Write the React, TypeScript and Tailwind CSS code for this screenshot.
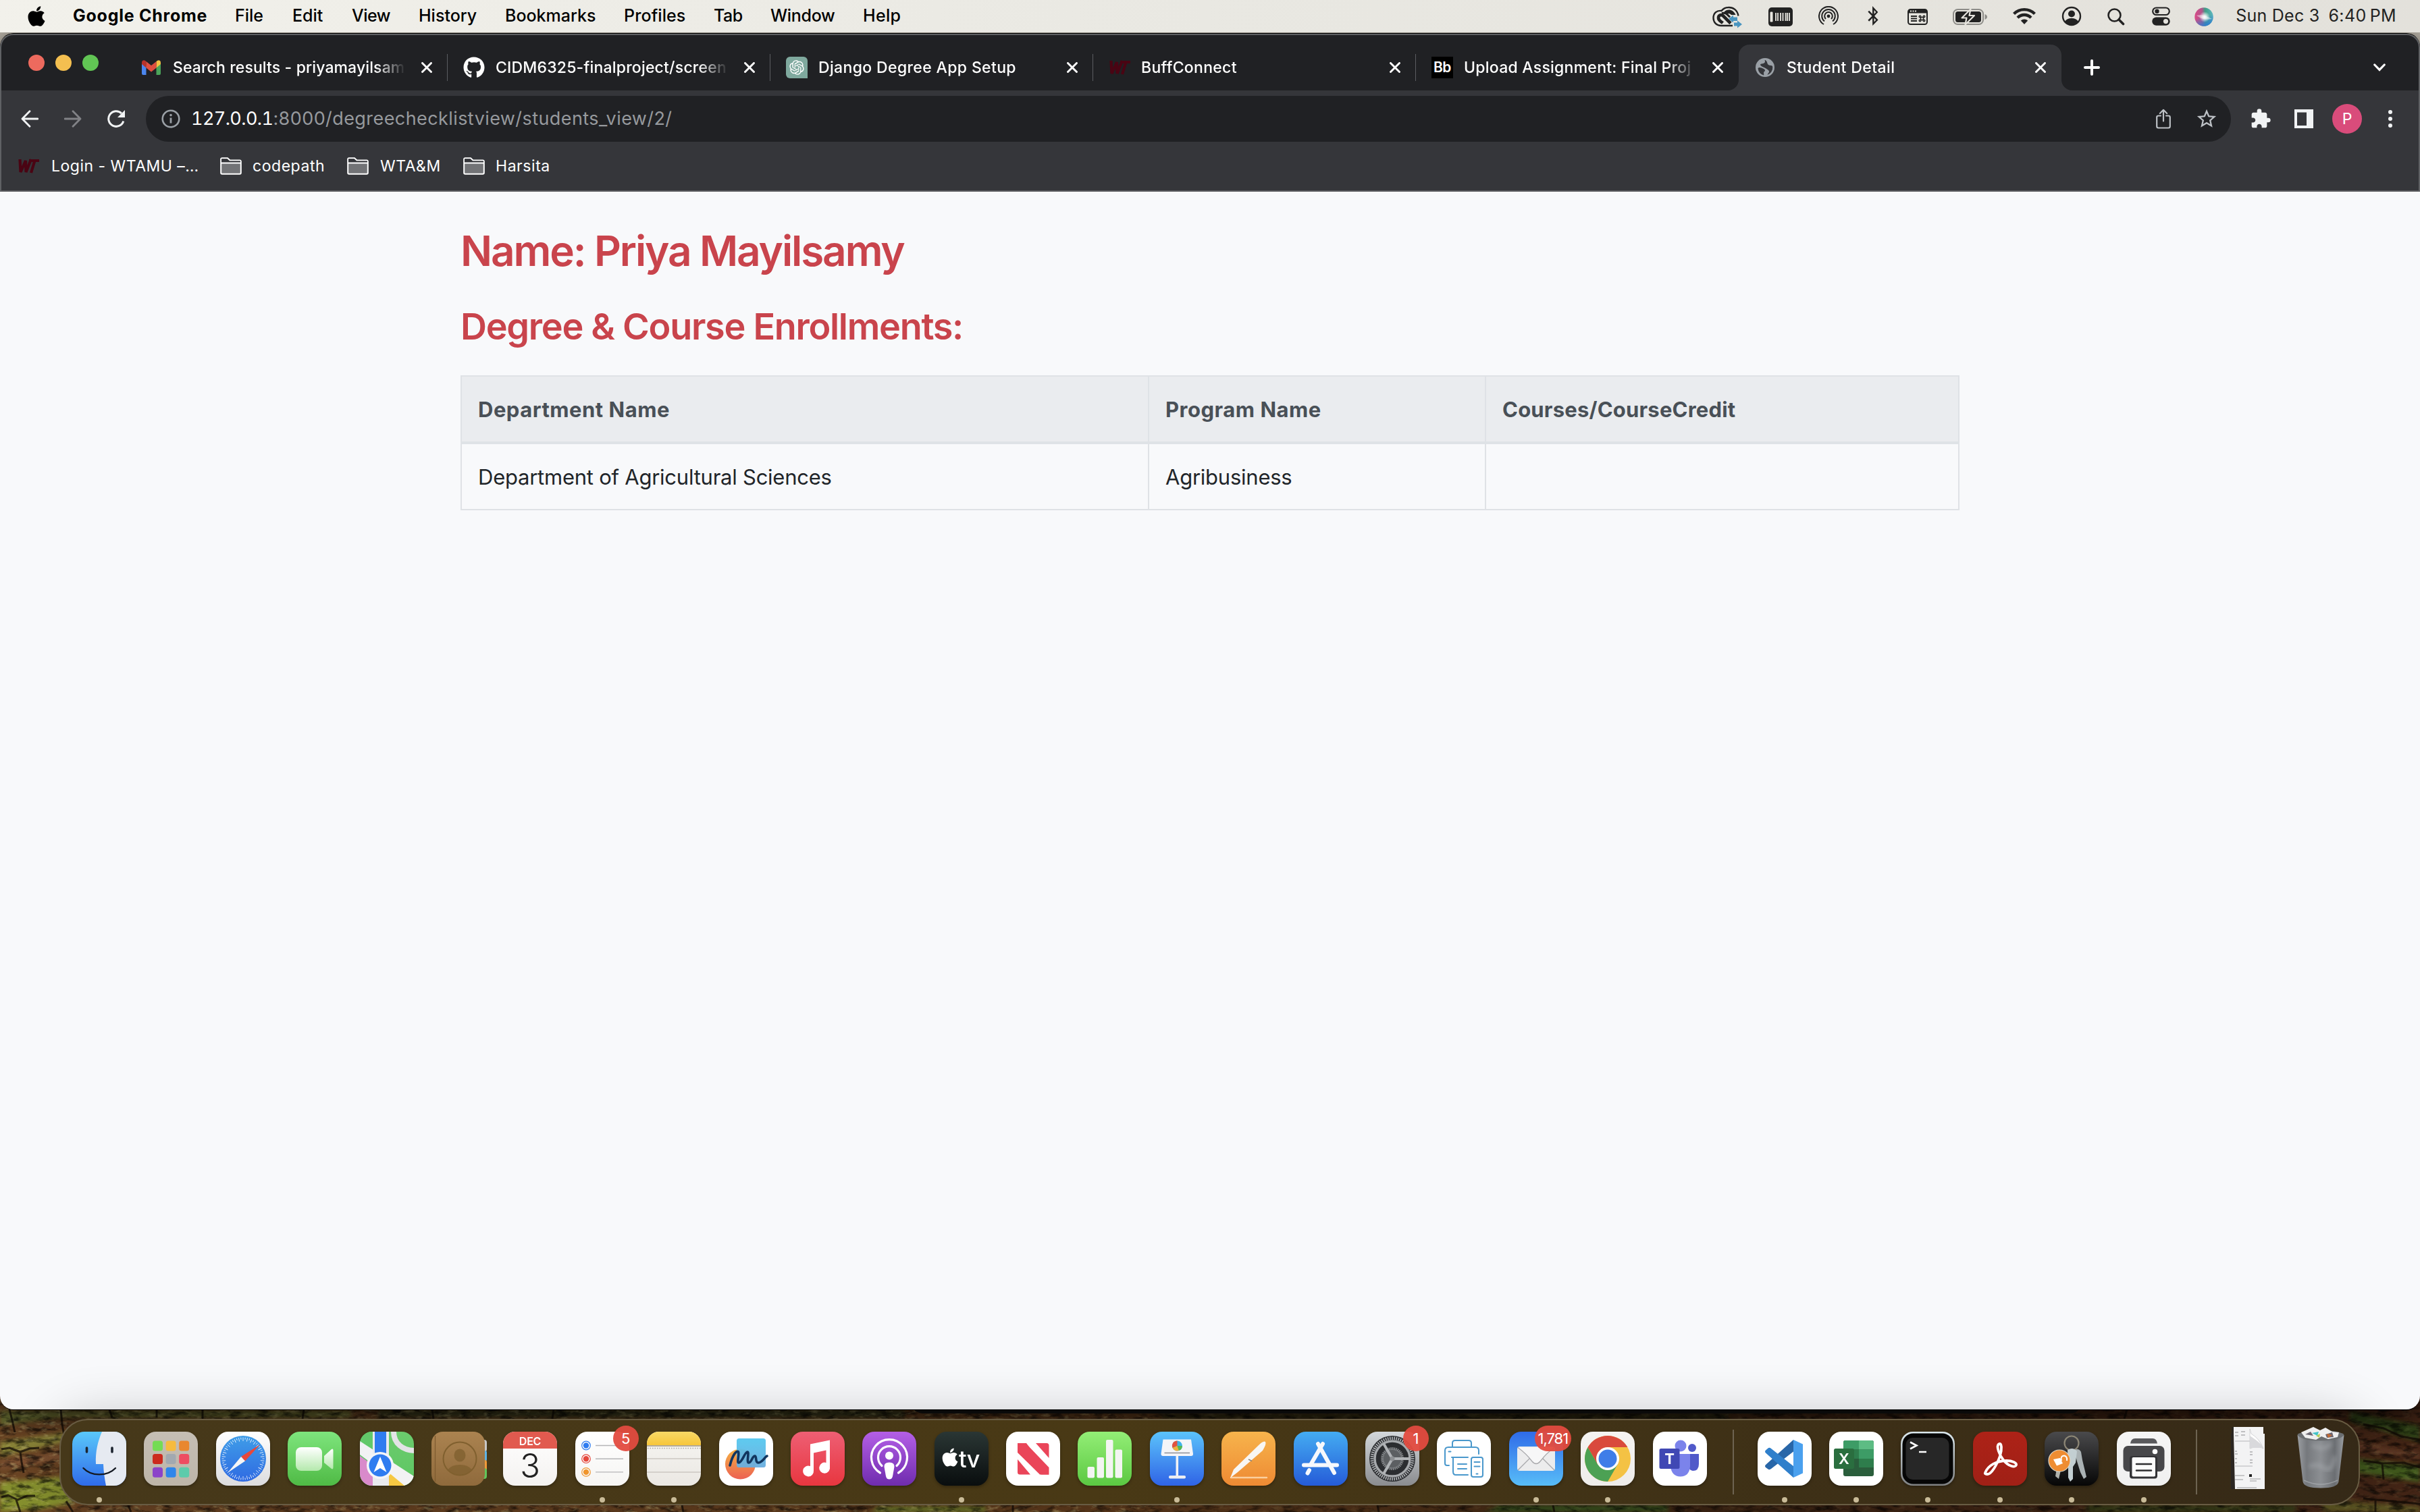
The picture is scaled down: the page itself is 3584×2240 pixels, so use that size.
import type { ReactNode } from "react";
import { FaApple, FaBluetoothB, FaGithub } from "react-icons/fa";
import { MdExtension, MdStarBorder } from "react-icons/md";
import { RiOpenaiFill } from "react-icons/ri";

/* ---------------------------------------------------------------- wallpaper */

const vines = [
  "M14 2088 L18 2104 L22 2122", "M90 2088 L92 2110 L96 2132", "M162 2088 L166 2100", "M2 2147 L14 2145 L30 2151 L44 2146 L58 2145 M30 2151 L32 2166 L35 2182",
  "M2 2218 L12 2215 L26 2222 L40 2216 L52 2216 M24 2222 L30 2240", "M98 2224 L108 2240", "M190 2230 L194 2240",
  "M3500 2110 L3530 2116 L3556 2128 L3584 2133", "M3500 2164 L3528 2168 L3560 2167 L3584 2174 M3528 2168 L3530 2192", "M3500 2220 L3584 2228 M3518 2222 L3518 2240",
  "M232 2088 V2100", "M300 2088 L300 2102", "M450 2088 L448 2102", "M640 2088 L642 2102", "M820 2088 L818 2102", "M1010 2230 L1012 2240", "M1500 2230 L1500 2240", "M2040 2230 L2042 2240", "M2300 2230 L2302 2240", "M3150 2088 L3146 2102",
];

function Wallpaper() {
  return (
    <svg className="absolute left-0 top-0" width="3584" height="2240" viewBox="0 0 3584 2240">
      <defs>
        <filter id="soil" x="0" y="0" width="100%" height="100%">
          <feTurbulence type="fractalNoise" baseFrequency="0.05 0.13" numOctaves="4" seed="7" />
          <feColorMatrix values="0 0 0 0 0  0 0 0 0 0  0 0 0 0 0  3.2 0 0 0 -1.45" />
        </filter>
        <filter id="glint" x="0" y="0" width="100%" height="100%">
          <feTurbulence type="fractalNoise" baseFrequency="0.07 0.16" numOctaves="4" seed="21" />
          <feColorMatrix values="0 0 0 0 0.75  0 0 0 0 0.68  0 0 0 0 0.3  0 2.6 0 0 -1.4" />
        </filter>
        <filter id="soft"><feGaussianBlur stdDeviation="3" /></filter>
        <linearGradient id="land" x1="0" x2="1" y1="0" y2="0">
          <stop offset="0" stopColor="#6a4424" />
          <stop offset="0.45" stopColor="#5d3a1c" />
          <stop offset="0.7" stopColor="#3c2413" />
          <stop offset="1" stopColor="#432516" />
        </linearGradient>
      </defs>
      <rect width="3584" height="100" fill="#b9b3a8" />
      <rect y="2060" width="3584" height="180" fill="url(#land)" />
      <g filter="url(#soft)">
        <path d="M0 2090 H520 V2100 H90 L0 2112 Z" fill="#6a7032" />
        <path d="M0 2136 L100 2122 V2136 L0 2158 Z" fill="#8a8438" />
        <path d="M0 2196 L90 2188 L110 2226 L60 2236 L0 2240 Z" fill="#86902e" />
        <path d="M0 2164 L100 2150 V2162 L0 2176 Z" fill="#7c5030" />
        <path d="M560 2088 H1340 V2100 H560 Z" fill="#3b3a1b" />
        <path d="M1300 2232 H1460 V2240 H1290 Z" fill="#6b7a2c" />
        <path d="M2220 2230 H2470 V2240 H2200 Z" fill="#35501a" />
        <path d="M1720 2094 H2560 V2102 H1720 Z" fill="#26280f" />
        <path d="M3480 2090 L3584 2112 V2136 L3480 2106 Z" fill="#2f3f18" />
        <path d="M3480 2160 L3584 2172 V2196 L3480 2180 Z" fill="#40591c" />
        <path d="M3440 2222 L3584 2232 V2240 H3440 Z" fill="#5b5420" />
        <path d="M3480 2134 L3584 2152 V2162 L3480 2146 Z" fill="#5a3524" />
        <path d="M3090 2230 H3400 V2240 H3090 Z" fill="#363d19" />
      </g>
      <rect y="2060" width="3584" height="180" filter="url(#soil)" opacity="0.6" />
      <rect y="2060" width="1700" height="180" filter="url(#glint)" opacity="0.45" />
      <rect y="2060" x="1700" width="1884" height="180" filter="url(#glint)" opacity="0.12" />
      <path d={vines.join(" ")} fill="none" stroke="#120b06" strokeWidth="3" strokeLinejoin="round" opacity="0.75" />
      <path d="M1350 2080 H3080 V2084 Q3078 2094 3064 2094 H1366 Q1354 2092 1350 2084 Z" fill="#181818" />
    </svg>
  );
}

/* ---------------------------------------------------------------- menu bar */

function MenuBar() {
  return (
    <div className="relative z-10 flex h-12 shrink-0 items-center bg-linear-to-r from-[#f2f1eb] via-[#e9e8e2] to-[#e3e1db] pb-px text-[25px] font-medium text-black">
      <FaApple className="ml-[37px] size-[34px] shrink-0" />
      <span className="ml-[37px] w-[240px] font-bold tracking-[0.75px]">Google Chrome</span>
      <span className="w-[85px]">File</span>
      <span className="w-[88px]">Edit</span>
      <span className="w-[99px] tracking-[-0.5px]">View</span>
      <span className="w-[128px]">History</span>
      <span className="w-[176px]">Bookmarks</span>
      <span className="w-[133px] tracking-[0.1px]">Profiles</span>
      <span className="w-[84px] tracking-[-0.5px]">Tab</span>
      <span className="w-[137px] tracking-[-0.3px]">Window</span>
      <span className="tracking-[0.3px]">Help</span>
      <div className="ml-auto flex items-center text-[#222]">
        <svg width="46" height="34" viewBox="0 0 46 34" className="relative top-[2px]">
          <path d="M38.500 14.500 C37 6 31 1.500 23.500 2 C18 2.200 15 5 13.500 7 C6 6 1.500 11 1.500 17.500 C1.500 24 6 29 13 29 H30" fill="none" stroke="#222" strokeWidth="2.400" />
          <path d="M27 25.500 L16 14.500 C13.500 12 9 13 9 17.500 C9 21.500 12.500 22.500 15.500 25" fill="none" stroke="#222" strokeWidth="4.600" />
          <path d="M14 10.500 C20 9 22 12.500 26 16.500" fill="none" stroke="#222" strokeWidth="3" />
          <path d="M17.500 8.500 C22 3.500 31 4.500 34.500 13 L28 13 C25.500 10 23 11.500 21.500 12.500 Z" fill="#222" />
          <path d="M24 19 L31 13.500 V16.500 H37 V22 H31 V24.500 Z" fill="#4a95c0" />
          <path d="M44 27 L37 21.500 V24.500 H32 V29.500 H37 V32.500 Z" fill="#4a95c0" />
        </svg>
        <svg className="ml-[37px] relative top-px" width="36" height="28" viewBox="0 0 36 28">
          <rect width="36" height="28" rx="5" fill="#222" />
          <rect x="2.500" y="6.500" width="4" height="15" rx="1.200" fill="#e9e7e1" />
          <path d="M11 8 V20 M14 8 V20 M18 8 V20 M21.500 8 V20 M25.500 8 V20 M28 8 V20 M31 8 V20" stroke="#e9e7e1" strokeWidth="1.800" />
        </svg>
        <svg className="ml-[38px]" width="30" height="30" viewBox="0 0 30 30">
          <g fill="none" stroke="#222" strokeWidth="2">
            <path d="M8 27 A14 14 0 1 1 22 27" />
            <path d="M9 22.500 A9.800 9.800 0 1 1 21 22.500" />
            <path d="M11 19 A5.800 5.800 0 1 1 19 19" />
          </g>
          <circle cx="15" cy="15" r="2.400" fill="#222" />
        </svg>
        <FaBluetoothB className="ml-[40px] h-[29px] w-[22px]" />
        <svg className="ml-[40px] relative top-px" width="30" height="24" viewBox="0 0 30 24">
          <rect x="1" y="1" width="28" height="22" rx="3.500" fill="none" stroke="#222" strokeWidth="2" />
          <path d="M1 3 Q2 1 4 1 H26 Q29 1 29 4 V6.500 H1 Z" fill="#222" />
          <path d="M4 3.500 h2 m1.500 0 h2 m1.500 0 h2" stroke="#e6e4de" strokeWidth="1.800" />
          <path d="M5 11 H14 M5 14.500 H14 M5 18 H14" stroke="#222" strokeWidth="1.900" />
          <g fill="none" stroke="#222" strokeWidth="1.500">
            <rect x="19.500" y="12.500" width="4" height="4" />
            <circle cx="18.500" cy="11.500" r="1.300" /><circle cx="24.500" cy="11.500" r="1.300" />
            <circle cx="18.500" cy="17.500" r="1.300" /><circle cx="24.500" cy="17.500" r="1.300" />
          </g>
        </svg>
        <svg className="ml-[37px] relative top-px" width="51" height="26" viewBox="0 0 51 26">
          <rect x="1" y="2" width="44" height="22" rx="6.500" fill="none" stroke="#8d8c88" strokeWidth="2" />
          <path d="M47.500 9 Q51 10.500 51 13 Q51 15.500 47.500 17 Z" fill="#8d8c88" />
          <rect x="4" y="5" width="38" height="16" rx="3.500" fill="#222" />
          <path d="M26.500 1.500 L13.500 14.500 H20.500 L18.500 24.500 L32 11 H24.500 Z" fill="#222" stroke="#e6e4de" strokeWidth="2.200" strokeLinejoin="round" />
        </svg>
        <svg className="ml-[38px]" width="34" height="26" viewBox="0 0 34 26">
          <g fill="none" stroke="#222" strokeWidth="4.400">
            <path d="M1.500 9.500 A22 22 0 0 1 32.500 9.500" />
            <path d="M7 15.200 A14 14 0 0 1 27 15.200" />
          </g>
          <path d="M17 25 L11.800 19.500 A7.500 7.500 0 0 1 22.200 19.500 Z" fill="#222" />
        </svg>
        <svg className="ml-[38px]" width="30" height="30" viewBox="0 0 30 30">
          <circle cx="15" cy="15" r="13" fill="none" stroke="#222" strokeWidth="2.400" />
          <circle cx="15" cy="11.500" r="5" fill="#222" />
          <path d="M5 23 Q8 18 15 18 Q22 18 25 23 Q21 28 15 28 Q9 28 5 23 Z" fill="#222" />
        </svg>
        <svg className="ml-[38px] relative top-px" width="26" height="26" viewBox="0 0 26 26">
          <circle cx="10.500" cy="10.500" r="9" fill="none" stroke="#222" strokeWidth="2.600" />
          <path d="M17 17 L23.500 23.500" stroke="#222" strokeWidth="3.600" strokeLinecap="round" />
        </svg>
        <svg className="ml-[40px]" width="27" height="28" viewBox="0 0 27 28">
          <rect x="1.200" y="1.500" width="24.600" height="10.500" rx="5.250" fill="none" stroke="#222" strokeWidth="2.200" />
          <circle cx="7.500" cy="6.800" r="3.200" fill="#222" />
          <rect x="0.300" y="15.500" width="26.400" height="12.200" rx="6.100" fill="#222" />
          <circle cx="20.500" cy="21.600" r="3.600" fill="#e4e2dc" />
        </svg>
        <svg className="ml-[36px] relative top-px" width="28" height="28" viewBox="0 0 28 28">
          <defs>
            <radialGradient id="siriCore"><stop offset="0" stopColor="#fff" /><stop offset="0.35" stopColor="#fff" stopOpacity="0.75" /><stop offset="1" stopColor="#fff" stopOpacity="0" /></radialGradient>
            <linearGradient id="siriBase" x1="0" y1="0.35" x2="1" y2="0.3"><stop offset="0" stopColor="#d84b86" /><stop offset="0.4" stopColor="#b0568c" /><stop offset="0.58" stopColor="#3e9f86" /><stop offset="1" stopColor="#5fb7c2" /></linearGradient>
            <linearGradient id="siriBlue" x1="0.3" y1="0" x2="0.6" y2="1"><stop offset="0.5" stopColor="#2f7dd0" stopOpacity="0" /><stop offset="1" stopColor="#2f7dd0" /></linearGradient>
          </defs>
          <circle cx="14" cy="14" r="13.700" fill="url(#siriBase)" />
          <circle cx="14" cy="14" r="13.700" fill="url(#siriBlue)" />
          <path d="M3 12 Q12 9 26 17 Q14 20 3 12 Z" fill="#fff" opacity="0.45" />
          <circle cx="15" cy="14" r="8" fill="url(#siriCore)" />
        </svg>
        <span className="ml-[33px] whitespace-pre font-normal tracking-[0.25px]">Sun Dec 3</span>
        <span className="ml-[13px] mr-[35px] font-normal tracking-[0.4px]">6:40<span className="ml-[5px]">PM</span></span>
      </div>
    </div>
  );
}

/* ---------------------------------------------------------------- tab strip */

function CloseX() {
  return (
    <svg width="16" height="16" viewBox="0 0 16 16">
      <path d="M1.500 1.500 L14.500 14.500 M14.500 1.500 L1.500 14.500" stroke="#fff" strokeWidth="2.900" strokeLinecap="round" />
    </svg>
  );
}

function WtLogo() {
  return (
    <svg width="32" height="22" viewBox="0 0 32 22">
      <g fill="none" stroke="#4a0413" strokeWidth="4.200">
        <path d="M3.500 1 L4.500 20 L12 3 L12.500 20 L20 1" />
        <path d="M17 3 H32 M25.500 3 L20 21" />
      </g>
    </svg>
  );
}

function GmailLogo() {
  return (
    <svg width="28" height="22" viewBox="0 0 28 22">
      <path d="M0 4 L6.500 8.500 V22 H2 Q0 22 0 20 Z" fill="#4b86ee" />
      <path d="M28 4 L21.500 8.500 V22 H26 Q28 22 28 20 Z" fill="#4ba55a" />
      <path d="M21.500 2 Q24.500 -1 27 1 Q28 2 28 4 V6 L21.500 11.500 Z" fill="#f2bf42" />
      <path d="M6.500 2 Q3.500 -1 1 1 Q0 2 0 4 V6 L6.500 11.500 Z" fill="#b8322a" />
      <path d="M6.500 2 L14 8 L21.500 2 V11.500 L14 17.500 L6.500 11.500 Z" fill="#de4e3f" />
    </svg>
  );
}

type TabProps = { icon: ReactNode; title: string; spacing: string; active?: boolean; divider?: boolean };

function BrowserTab({ icon, title, spacing, active, divider }: TabProps) {
  return (
    <div className={`relative flex h-[68px] w-[478px] shrink-0 items-center ${active ? "rounded-t-[16px] bg-[#35363a]" : ""}`}>
      {active && (
        <>
          <svg className="absolute -left-4 bottom-0" width="16" height="16"><path d="M16 0 V16 H0 A16 16 0 0 0 16 0 Z" fill="#35363a" /></svg>
          <svg className="absolute -right-4 bottom-0" width="16" height="16"><path d="M0 0 V16 H16 A16 16 0 0 1 0 0 Z" fill="#35363a" /></svg>
        </>
      )}
      <div className="ml-[23px] flex w-8 shrink-0 justify-center">{icon}</div>
      <div className={`ml-[16px] w-[345px] shrink-0 whitespace-nowrap text-[23px] font-medium text-white [mask-image:linear-gradient(to_right,#000_87%,transparent_100%)] ${spacing}`}>
        {title}
      </div>
      <div className="ml-[23px]"><CloseX /></div>
      {divider && <div className="ml-[22px] h-10 w-[2px] bg-[#5b5d61]" />}
    </div>
  );
}

function TabStrip() {
  return (
    <div className="flex h-[84px] items-center bg-[#202124] pt-4">
      <div className="mb-[14px] ml-[42px] flex w-[143px] gap-4">
        <div className="size-6 rounded-full bg-[#ed6a5e]" />
        <div className="size-6 rounded-full bg-[#f4bf50]" />
        <div className="size-6 rounded-full bg-[#61c554]" />
      </div>
      <BrowserTab divider spacing="tracking-[0.12px]" title="Search results - priyamayilsam" icon={<GmailLogo />} />
      <BrowserTab divider spacing="tracking-[0.2px]" title="CIDM6325-finalproject/screen" icon={<FaGithub className="size-8 text-white" />} />
      <BrowserTab
        divider
        spacing="tracking-[0.36px]"
        title="Django Degree App Setup"
        icon={<div className="flex size-8 items-center justify-center rounded-[6px] rounded-br-none bg-[#7fa99e]"><RiOpenaiFill className="size-[26px] text-white" /></div>}
      />
      <BrowserTab divider spacing="tracking-[0.3px]" title="BuffConnect" icon={<WtLogo />} />
      <BrowserTab
        spacing="tracking-[0.25px]"
        title="Upload Assignment: Final Proj"
        icon={<div className="flex size-8 items-center justify-center bg-black text-[21px] font-semibold tracking-[-0.5px] text-white">Bb</div>}
      />
      <BrowserTab
        active
        spacing="tracking-[0.4px]"
        title="Student Detail"
        icon={
          <svg width="28" height="28" viewBox="0 0 28 28">
            <circle cx="14" cy="14" r="14" fill="#9aa0a6" />
            <path d="M3.500 15.500 C5 12.500 9 15 11 15.500 C14 16.500 15 19 13 20 C11 21 13 24.500 12 25.500 A12 12 0 0 1 3.500 15.500 Z" fill="#35363a" />
            <path d="M14.500 3 C18 5.500 16.500 8 19 10 C21 12 25 9.500 25.300 13.500 A11.500 11.500 0 0 1 17.500 25 C19 21.500 21.500 21 19 18 C16.500 15.500 13.500 14.500 11.500 13.500 C7 11.500 5.500 9 9 8.500 C13 8 15 6.500 13.500 3 Z" fill="#35363a" />
          </svg>
        }
      />
      <svg className="ml-[33px] shrink-0" width="24" height="24" viewBox="0 0 24 24">
        <path d="M12 2 V22 M2 12 H22" stroke="#fff" strokeWidth="4" strokeLinecap="round" />
      </svg>
      <svg className="ml-auto mr-[51px] shrink-0" width="18" height="12" viewBox="0 0 18 12">
        <path d="M1.800 2 L9 9.400 L16.200 2" fill="none" stroke="#fff" strokeWidth="3.200" strokeLinecap="round" />
      </svg>
    </div>
  );
}

/* ---------------------------------------------------------------- toolbar */

function Toolbar() {
  return (
    <div className="flex h-[84px] items-center bg-[#35363a]">
      <svg className="ml-[31px] shrink-0" width="26" height="26" viewBox="0 0 26 26">
        <path d="M25 13 H3 M13 1.800 L2 13 L13 24.200" fill="none" stroke="#f1f3f4" strokeWidth="2.800" strokeLinejoin="round" strokeLinecap="round" />
      </svg>
      <svg className="ml-[38px] shrink-0" width="26" height="26" viewBox="0 0 26 26">
        <path d="M1 13 H23 M13 1.800 L24 13 L13 24.200" fill="none" stroke="#818286" strokeWidth="2.800" strokeLinejoin="round" strokeLinecap="round" />
      </svg>
      <svg className="ml-[37px] shrink-0" width="28" height="28" viewBox="0 0 28 28">
        <path d="M24.800 17.500 A11.300 11.300 0 1 1 22 6" fill="none" stroke="#f1f3f4" strokeWidth="3" />
        <path d="M27 1 V12 H16 Z" fill="#f1f3f4" />
      </svg>
      <div className="ml-[30px] flex h-[68px] w-[3088px] shrink-0 items-center rounded-full bg-[#202124]">
        <svg className="ml-[23px] shrink-0" width="28" height="28" viewBox="0 0 28 28">
          <circle cx="14" cy="14" r="12.300" fill="none" stroke="#9aa0a6" strokeWidth="2.600" />
          <path d="M14 12.500 V20.500" stroke="#9aa0a6" strokeWidth="2.800" />
          <circle cx="14" cy="8.600" r="1.800" fill="#9aa0a6" />
        </svg>
        <span className="ml-[16px] text-[27px] tracking-[0.42px] text-[#96999d]">
          <span className="tabular-nums tracking-[-0.6px] text-white">127.0.0.1</span>:8000/degreechecklistview/students_view/2/
        </span>
        <svg className="ml-auto shrink-0" width="22" height="30" viewBox="0 0 22 30">
          <g fill="none" stroke="#bdc1c6" strokeWidth="2.200" strokeLinecap="round" strokeLinejoin="round">
            <path d="M7 10.500 H3.500 Q1.200 10.500 1.200 12.800 V26 Q1.200 28.500 3.500 28.500 H18.500 Q20.800 28.500 20.800 26 V12.800 Q20.800 10.500 18.500 10.500 H15" />
            <path d="M11 18.500 V2 M5.800 7 L11 1.800 L16.200 7" />
          </g>
        </svg>
        <MdStarBorder className="ml-[36px] mr-[19px] size-[34px] text-[#bdc1c6]" />
      </div>
      <MdExtension className="ml-[28px] size-[32px] shrink-0 text-[#f1f3f4]" />
      <svg className="ml-[34px] shrink-0" width="28" height="28" viewBox="0 0 28 28">
        <path fillRule="evenodd" d="M0 0 H28 V28 H0 Z M4 4.500 V24 H18 V4.500 Z" fill="#f1f3f4" />
      </svg>
      <div className="ml-[28px] flex size-11 shrink-0 items-center justify-center rounded-full bg-[#d94c7b] text-[23px] text-white">P</div>
      <svg className="ml-[38px] shrink-0" width="8" height="28" viewBox="0 0 8 28">
        <g fill="#f1f3f4"><circle cx="4" cy="4" r="3" /><circle cx="4" cy="14" r="3" /><circle cx="4" cy="24" r="3" /></g>
      </svg>
    </div>
  );
}

function Folder() {
  return (
    <svg width="32" height="26" viewBox="0 0 32 26">
      <path d="M1.200 3 Q1.200 1.200 3 1.200 H11 L14.500 4.500 H29 Q30.800 4.500 30.800 6.500 V23 Q30.800 24.800 29 24.800 H3 Q1.200 24.800 1.200 23 Z" fill="#727376" stroke="#fff" strokeWidth="2" />
      <path d="M2 2.200 H10.500 L14 5.500 H30 V8 H2 Z" fill="#35363a" />
      <path d="M1.500 8.500 H30.500" stroke="#fff" strokeWidth="1.800" />
    </svg>
  );
}

function BookmarksBar() {
  return (
    <div className="flex h-[66px] items-center border-b-2 border-[#5c5d60] bg-[#35363a] pb-2 text-[23px] tracking-[0.55px] text-white">
      <div className="ml-[26px]"><WtLogo /></div>
      <span className="ml-[18px] w-[250px] tracking-[0.5px]">Login - WTAMU –…</span>
      <Folder /><span className="ml-[16px] w-[140px]">codepath</span>
      <Folder /><span className="ml-[17px] w-[123px]">WTA&amp;M</span>
      <Folder /><span className="ml-[16px]">Harsita</span>
    </div>
  );
}

/* ---------------------------------------------------------------- web page */

const columns = [
  { name: "Department Name", spacing: "tracking-[0.5px]" },
  { name: "Program Name", spacing: "tracking-[0.5px]" },
  { name: "Courses/CourseCredit", spacing: "tracking-[0.2px]" },
];
const enrollments = [["Department of Agricultural Sciences", "Agribusiness", ""]];

function StudentPage() {
  return (
    <main className="h-[1804px] rounded-b-[20px] bg-[#f8f9fb] pl-[682px]">
      <h1 className="pt-[50px] text-[62px] font-[560] leading-[76px] tracking-[-2.1px] text-[#c9444c]">Name: Priya Mayilsamy</h1>
      <h2 className="mt-[40px] text-[54px] font-[560] leading-[68px] tracking-[-1.3px] text-[#c9444c]">Degree &amp; Course Enrollments:</h2>
      <div className="mt-[38px] w-[2220px] border-2 border-l-0 border-[#dfe2e6] text-[31px]">
        <div className="grid grid-cols-[1018px_499px_701px] border-b-4 border-[#dfe2e6] bg-[#eaecef] font-bold text-[#495057]">
          {columns.map(({ name, spacing }) => (
            <div key={name} className={`flex h-24 items-center border-l-2 border-[#dfe2e6] pl-[24px] pt-[2px] ${spacing}`}>{name}</div>
          ))}
        </div>
        {enrollments.map((row) => (
          <div key={row[0]} className="grid grid-cols-[1018px_499px_701px] tracking-[-0.24px] text-[#212529]">
            {row.map((cell, i) => (
              <div key={i} className="flex h-24 items-center border-l-2 border-[#dfe2e6] pl-[24px] pt-[2px]">{cell}</div>
            ))}
          </div>
        ))}
      </div>
    </main>
  );
}

/* ---------------------------------------------------------------- dock */

function Tile({ id, from, to, children }: { id: string; from: string; to: string; children?: ReactNode }) {
  return (
    <svg className="block drop-shadow-[0_2px_2px_rgba(0,0,0,0.3)]" width="80" height="80" viewBox="0 0 80 80">
      <defs>
        <linearGradient id={id} x1="0" y1="0" x2="0" y2="1"><stop offset="0" stopColor={from} /><stop offset="1" stopColor={to} /></linearGradient>
        <clipPath id={`${id}-clip`}><rect width="80" height="80" rx="18" /></clipPath>
      </defs>
      <g clipPath={`url(#${id}-clip)`}>
        <rect width="80" height="80" fill={`url(#${id})`} />
        {children}
      </g>
    </svg>
  );
}

const launchpadColors = ["#74dc54", "#f6bb3e", "#e9872f", "#cc2a1e", "#a2a9b0", "#ee4c62", "#8b43c9", "#2f86ea", "#5ccbab"];
const ticks = Array.from({ length: 60 }, (_, i) => i * 6);

const finder = (
  <Tile id="finder" from="#5ac8fa" to="#2f6bea">
    <path d="M44 0 H80 V80 H50 C48 70 46.500 60 46 48 H35 C34 30 38 14 44 0 Z" fill="#e6eaf1" />
    <path d="M21.500 24 V30 M59 24 V30" stroke="#1d2530" strokeWidth="3.600" strokeLinecap="round" />
    <path d="M16.500 54 C28 66.500 52 66.500 64 54" fill="none" stroke="#151a22" strokeWidth="2.400" strokeLinecap="round" />
  </Tile>
);
const launchpad = (
  <Tile id="launchpad" from="#c5beb4" to="#bdb5a9">
    {launchpadColors.map((c, i) => (
      <rect key={c} x={13 + (i % 3) * 19.6} y={13.500 + Math.floor(i / 3) * 19.6} width="15" height="15" rx="3.500" fill={c} />
    ))}
  </Tile>
);
const safari = (
  <Tile id="safari" from="#ffffff" to="#dcdcde">
    <defs><linearGradient id="safariDial" x1="0" y1="0" x2="0" y2="1"><stop offset="0" stopColor="#3f9de8" /><stop offset="1" stopColor="#2f6ae2" /></linearGradient></defs>
    <circle cx="40" cy="40" r="34" fill="url(#safariDial)" />
    {ticks.map((a, i) => (
      <path key={a} d={i % 2 ? "M40 8.500 V11.500" : "M40 8.500 V14"} stroke="#fff" strokeWidth="0.900" opacity="0.85" transform={`rotate(${a} 40 40)`} />
    ))}
    <path d="M65 19 L43 43.500 L37 37 Z" fill="#e8473b" />
    <path d="M17 61 L37 37 L43 43.500 Z" fill="#f6f6f6" />
  </Tile>
);
const facetime = (
  <Tile id="facetime" from="#7ee57d" to="#4fba45">
    <defs><linearGradient id="ftCam" x1="0" y1="0" x2="0" y2="1"><stop offset="0" stopColor="#fff" /><stop offset="1" stopColor="#b4e9ac" /></linearGradient></defs>
    <rect x="12" y="23" width="39" height="35" rx="8" fill="url(#ftCam)" />
    <path d="M54 36 L65 26 Q67.500 24.500 67.500 28 V53 Q67.500 56.500 65 55 L54 46 Z" fill="url(#ftCam)" />
  </Tile>
);
const maps = (
  <Tile id="maps" from="#6bcb6d" to="#5ec763">
    <path d="M0 0 H18 V80 H0 Z" fill="#62c96a" />
    <path d="M0 36 L20 50 V80 H0 Z" fill="#d98acb" />
    <path d="M44 66 L68 80 H42 Z" fill="#f6c843" />
    <path d="M0 14 L80 66 V80 H62 L0 34 Z" fill="#f2f2f4" />
    <path d="M42 80 V60 L66 80 Z" fill="#f6c843" />
    <path d="M50 0 C50 18 64 28 82 28" fill="none" stroke="#e3e3e6" strokeWidth="8" />
    <path d="M19 0 H43 V80 H19 Z" fill="#e9eaee" />
    <path d="M22 0 H39 V36 H22 Z" fill="#2f7cf0" />
    <circle cx="30" cy="50" r="20" fill="#f4f5f8" />
    <circle cx="30" cy="50" r="16.500" fill="#2f7cf0" />
    <path d="M30 37 L39.500 60 L30 54 L20.500 60 Z" fill="#fff" />
  </Tile>
);
const contacts = (
  <svg className="block" width="84" height="80" viewBox="0 0 84 80">
    <defs><linearGradient id="leather" x1="0" y1="0" x2="0" y2="1"><stop offset="0" stopColor="#ab8350" /><stop offset="1" stopColor="#8f6a3c" /></linearGradient></defs>
    <rect x="66" y="12" width="16" height="18" rx="4" fill="#c8c8c8" /><rect x="66" y="28" width="16" height="16" rx="3" fill="#5eb4e6" />
    <rect x="66" y="42" width="16" height="16" rx="3" fill="#ef9a3a" /><rect x="66" y="54" width="16" height="16" rx="4" fill="#62c65b" />
    <rect width="79" height="80" rx="17" fill="url(#leather)" />
    <path d="M5.500 6 V74" stroke="#7d5a30" strokeWidth="1.200" />
    <circle cx="42" cy="40" r="24.500" fill="none" stroke="#80602f" strokeWidth="2" />
    <ellipse cx="42" cy="35" rx="8.500" ry="9.500" fill="#80602f" opacity="0.8" />
    <path d="M24.500 56 Q30 49 42 49 Q54 49 59.500 56 Q52 64.500 42 64.500 Q32 64.500 24.500 56 Z" fill="#80602f" opacity="0.8" />
  </svg>
);
const calendar = (
  <Tile id="calendar" from="#ffffff" to="#f4f2f0">
    <rect width="80" height="25" fill="#e15a4f" />
    <text x="40" y="19.500" textAnchor="middle" fontSize="16" fontWeight="600" fill="#fff" letterSpacing="-0.200">DEC</text>
    <text x="40" y="68" textAnchor="middle" fontSize="49" fontWeight="300" fill="#222">3</text>
  </Tile>
);
const reminders = (
  <Tile id="reminders" from="#ffffff" to="#f6f5f3">
    {["#2f7cf0", "#e5483d", "#f0962e"].map((c, i) => (
      <g key={c}>
        <circle cx="16" cy={20.500 + i * 19.700} r="4.200" fill={c} />
        <circle cx="16" cy={20.500 + i * 19.700} r="6.300" fill="none" stroke={c} strokeWidth="1.200" />
        <path d={`M30 ${20.500 + i * 19.700} H71`} stroke="#b5b5b7" strokeWidth="1.400" />
      </g>
    ))}
  </Tile>
);
const notes = (
  <Tile id="notes" from="#f6f5f2" to="#ebe8e3">
    <defs><linearGradient id="notesTop" x1="0" y1="0" x2="0" y2="1"><stop offset="0" stopColor="#f8d966" /><stop offset="1" stopColor="#f7c63a" /></linearGradient></defs>
    <rect width="80" height="20" fill="url(#notesTop)" />
    <rect y="20" width="80" height="2" fill="#b3aa97" />
    <path d="M1 24.500 H80" stroke="#a9a69f" strokeWidth="1.500" strokeDasharray="1.500 2" />
    <path d="M0 40 H80 M0 60 H80" stroke="#cbc8c2" strokeWidth="1.400" />
  </Tile>
);
const freeform = (
  <Tile id="freeform" from="#ffffff" to="#ffffff">
    <defs>
      <linearGradient id="ffOrange" x1="0" y1="0" x2="0" y2="1"><stop offset="0" stopColor="#f5b143" /><stop offset="1" stopColor="#ec6152" /></linearGradient>
      <linearGradient id="ffBlue" x1="0" y1="0" x2="0" y2="1"><stop offset="0" stopColor="#55c8ef" /><stop offset="1" stopColor="#6badde" /></linearGradient>
    </defs>
    <circle cx="31.500" cy="48" r="22.500" fill="url(#ffOrange)" />
    <rect x="26" y="10" width="43" height="43" rx="3.500" fill="url(#ffBlue)" opacity="0.95" />
    <path d="M16 50 C20 34 26 27 28.500 30 C30 34 26 46 29 46 C34 46 38 30 42 30 C45 30 40 46 44 46 C48 46 49 36 53 36 C56 36 53 46 58 46 C64 46 68 37 71 36" fill="none" stroke="#12365f" strokeWidth="3.600" strokeLinecap="round" />
  </Tile>
);
const music = (
  <Tile id="music" from="#ee5f74" to="#e8363f">
    <path d="M29 18.500 L58 12.500 V52 A8 8 0 1 1 52.500 46 V27.500 L34 31.500 V57.500 A8 8 0 1 1 29 51 Z" fill="#fff" />
  </Tile>
);
const podcasts = (
  <Tile id="podcasts" from="#b45fe6" to="#6f2cae">
    <g fill="none" stroke="#fff" strokeWidth="3.200" strokeLinecap="round">
      <path d="M26.500 61 A26.500 26.500 0 1 1 53.500 61" />
      <path d="M29 50.500 A16.500 16.500 0 1 1 51 50.500" />
    </g>
    <circle cx="40" cy="35.500" r="6" fill="#fff" />
    <path d="M32.500 52 Q32 45.500 40 45.500 Q48 45.500 47.500 52 L45 66 Q44 70.500 40 70.500 Q36 70.500 35 66 Z" fill="#fff" />
  </Tile>
);
const tv = (
  <Tile id="tv" from="#2a3634" to="#090d0e">
    <FaApple x="7.500" y="22.500" size="31" color="#fff" />
    <text x="36" y="52.500" fontSize="34" fontWeight="500" fill="#fff" letterSpacing="-0.500">tv</text>
  </Tile>
);
const news = (
  <Tile id="news" from="#ffffff" to="#ffffff">
    <path d="M17 17 H30 L63.500 63.500 H50 L17 31 Z" fill="#ea4559" />
    <path d="M17 17 H29 L63.500 53 V63.500 H52 L17 28 Z" fill="#ea4559" />
    <path d="M44 17 H60 Q63.500 17 63.500 20.500 V39 Z" fill="#ea4559" />
    <path d="M17 41 L36 63.500 H20.500 Q17 63.500 17 60 Z" fill="#ea4559" />
  </Tile>
);
const numbers = (
  <Tile id="numbers" from="#93ee76" to="#5bc842">
    <rect x="14.500" y="52" width="10.500" height="16.500" rx="2" fill="#f3f5f2" />
    <rect x="28.500" y="38" width="10.500" height="30.500" rx="2" fill="#f3f5f2" />
    <rect x="42" y="12" width="10.500" height="56.500" rx="2" fill="#f3f5f2" />
    <rect x="55.500" y="26.500" width="10.500" height="42" rx="2" fill="#f3f5f2" />
  </Tile>
);
const keynote = (
  <Tile id="keynote" from="#5bc3fb" to="#2f63e6">
    <rect x="38.500" y="35" width="3.600" height="32" fill="#f0f2f5" />
    <rect x="28" y="65" width="25" height="4.500" rx="2" fill="#eceef2" />
    <path d="M19.500 11.500 H61 L64 33 Q64 36 61 36 H19.500 Q16.500 36 16.500 33 Z" fill="#f4f5f8" />
    <path d="M21.500 31.500 H59" stroke="#8b8f97" strokeWidth="1.500" />
    <circle cx="40.500" cy="21" r="7.500" fill="#3fb4e8" />
    <path d="M40.500 21 V13.500 A7.500 7.500 0 0 0 33.500 24 Z" fill="#e2533f" />
    <path d="M40.500 21 L33.500 24 A7.500 7.500 0 0 0 43 28 Z" fill="#f0b13a" />
    <path d="M40.500 21 L43 28 A7.500 7.500 0 0 0 48 21 Z" fill="#58b951" />
  </Tile>
);
const pages = (
  <Tile id="pages" from="#f7b44c" to="#ee8a33">
    <path d="M14 68 H67" stroke="#fbcf9d" strokeWidth="2.400" strokeLinecap="round" />
    <path d="M65 15 Q67 18 61 28 L24 60 L13 68.500 L18 56 L54 21 Q62 13 65 15 Z" fill="#f8f6f3" />
    <path d="M40 41 L45 43.500" stroke="#8b8377" strokeWidth="1.500" />
  </Tile>
);
const appStore = (
  <Tile id="appstore" from="#44acf2" to="#255bd8">
    <g stroke="#f6f8fc" strokeWidth="6" strokeLinecap="round" fill="none">
      <path d="M43 18 L25 49" /><path d="M36 18 L60 61" /><path d="M15 49.500 H64" /><path d="M23 57 L20.500 61.500" />
    </g>
  </Tile>
);
const settings = (
  <Tile id="settings" from="#d3d7da" to="#8a8c8f">
    <circle cx="40" cy="40" r="34" fill="#2b2d30" />
    {ticks.map((a) => (
      <path key={a} d="M40 7.500 V12" stroke="#b9bcbf" strokeWidth="1.500" transform={`rotate(${a} 40 40)`} />
    ))}
    <circle cx="40" cy="40" r="26" fill="none" stroke="#a6a9ac" strokeWidth="3.500" />
    <circle cx="40" cy="40" r="15" fill="#5c5f62" stroke="#86898c" strokeWidth="4" strokeDasharray="1.600 1" />
    {[0, 120, 240].map((a) => (
      <path key={a} d="M40 40 H66" stroke="#b0b3b6" strokeWidth="4" transform={`rotate(${a} 40 40)`} />
    ))}
    <circle cx="40" cy="40" r="3.500" fill="#8d9093" />
  </Tile>
);
const printerApp = (
  <Tile id="printerapp" from="#ffffff" to="#ffffff">
    <g fill="none" stroke="#4a98cc" strokeWidth="2" strokeLinecap="round" strokeLinejoin="round">
      <path d="M23 23 V17 Q23 13 27 13 H47 Q51 13 51 17 V23" />
      <path d="M18 50 H15 Q12 50 12 47 V28 Q12 23 17 23 H57 Q62 23 62 28 V33" />
      <path d="M22 38 H46 M24 38 V59 Q24 64 28 64 H46 M17.500 29.500 H20.500 M31 48 H44 M31 55 H44" />
      <rect x="51" y="38" width="17" height="29" rx="3" />
      <path d="M55.500 45 H63.500 M55.500 51.500 H63.500 M58.500 62.500 H60.500" />
    </g>
  </Tile>
);
const mail = (
  <Tile id="mail" from="#2f6be8" to="#58bdf8">
    <rect x="12" y="22" width="56" height="36" rx="4" fill="#ececed" />
    <path d="M13 57 L32 38 M67 57 L48 38" stroke="#a9a9ac" strokeWidth="1.300" />
    <path d="M13 23.500 Q26 33 34 44 Q40 51 46 44 Q54 33 67 23.500" fill="#f7f7f8" stroke="#a9a9ac" strokeWidth="1.300" />
  </Tile>
);
const chrome = (
  <Tile id="chrome" from="#f5f3f1" to="#eeecea">
    <circle cx="40" cy="40" r="34" fill="#f4c244" />
    <path d="M40 40 L25.300 48.500 L10.560 23 A34 34 0 0 0 40 74 L54.700 48.500 Z" fill="#4ca154" />
    <path d="M40 40 L40 23 L69.440 23 A34 34 0 0 0 10.560 23 L25.300 48.500 Z" fill="#d94a3d" />
    <circle cx="40" cy="40" r="17" fill="#fff" />
    <circle cx="40" cy="40" r="13.500" fill="#3f7de8" />
  </Tile>
);
const teams = (
  <Tile id="teams" from="#ffffff" to="#ffffff">
    <circle cx="58" cy="24" r="6" fill="#5059c9" />
    <path d="M52 33 H68 V48 Q68 58 59 58 Q52 57 52 48 Z" fill="#5059c9" />
    <circle cx="41" cy="21" r="8.500" fill="#7b83eb" />
    <path d="M26 33 H55 V51 Q54 66.500 40.500 66.500 Q28 66 26 52 Z" fill="#7b83eb" />
    <rect x="9.500" y="25" width="30" height="30" rx="2.500" fill="#4048b4" />
    <text x="24.500" y="48" textAnchor="middle" fontSize="22" fontWeight="700" fill="#fff">T</text>
  </Tile>
);
const vscode = (
  <Tile id="vscode" from="#ffffff" to="#ffffff">
    <path d="M53 12 L67 18.500 V61.500 L53 68 Z" fill="#4aa0ee" />
    <path d="M53 12 L12 49 Q10 51 12 53 L15.500 55.500 Q17.500 57 20 55 L53 29.500 Z" fill="#2866a8" />
    <path d="M53 68 L12 31.500 Q10 29.500 12 27.500 L15.500 24.500 Q17.500 23 20 25 L53 51 Z" fill="#2f7fcb" />
  </Tile>
);
const excel = (
  <Tile id="excel" from="#ffffff" to="#ffffff">
    <rect x="21" y="13" width="45" height="53" rx="3" fill="#2a5e3c" />
    <path d="M21 16 Q21 13 24 13 H44 V26.500 H21 Z" fill="#3d9c66" /><path d="M44 13 H63 Q66 13 66 16 V26.500 H44 Z" fill="#5dbc84" />
    <path d="M21 26.500 H44 V40 H21 Z" fill="#2e7d4c" /><path d="M44 26.500 H66 V40 H44 Z" fill="#3d9c66" />
    <path d="M44 40 H66 V53 H44 Z" fill="#2e7d4c" />
    <rect x="7" y="25" width="30" height="30" rx="2.500" fill="#2a6e3f" />
    <text x="22" y="48" textAnchor="middle" fontSize="22" fontWeight="600" fill="#fff">X</text>
  </Tile>
);
const terminal = (
  <Tile id="terminal" from="#dce9ee" to="#7e8082">
    <rect x="2.500" y="2.500" width="75" height="75" rx="16" fill="#060606" />
    <rect x="7.500" y="9" width="64" height="62" rx="10" fill="#272727" />
    <path d="M14 15.500 L23.500 20.500 L14 25.500 M27 30 H38" fill="none" stroke="#fff" strokeWidth="2.600" />
  </Tile>
);
const acrobat = (
  <Tile id="acrobat" from="#ad2217" to="#a02016">
    <path d="M18 61 C22 50 35 43 50 43 C58 43 65 46 64 49.500 C62.500 54 52 51 45 42 C39 34 34 22 38 18.500 C43 15 43 27 40 36 C35 50 27 63 21.500 63 C18.500 63 17.500 62 18 61 Z" fill="none" stroke="#fff" strokeWidth="3.800" strokeLinejoin="round" />
  </Tile>
);
const keychain = (
  <Tile id="keychain" from="#4a4a4c" to="#060606">
    <circle cx="40" cy="17" r="10.500" fill="none" stroke="#8c8675" strokeWidth="2.200" />
    <path d="M44 27 Q51 24 54 30 L56 42 L62 67 L58 70 L53 60 L48 44 Z" fill="#aab2b4" />
    <path d="M34 27 Q42 22 48 29 L46 46 L42 52 V70 L38 74 L35 68 V50 Z" fill="#c3cfd2" />
    <path d="M18 54 L24 57 L21 70 L16 66 Z" fill="#b0b2ac" />
    <circle cx="22" cy="43" r="16" fill="#ef8d32" stroke="#ddd7c6" strokeWidth="1.200" />
    <path d="M13 41 L23 39 L27 47 L18 50.500 Z" fill="#fff" />
    <path d="M25 43 Q23 36 29 35.500 Q34 36.500 33 43" fill="none" stroke="#fff" strokeWidth="2" />
  </Tile>
);
const printQueue = (
  <Tile id="printqueue" from="#f5f5f5" to="#f0f0f0">
    <path d="M20 17.500 Q21 10 27 10 H53 Q59 10 60 17.500 Z" fill="#59595c" />
    <rect x="9.500" y="21" width="61" height="38" rx="7" fill="#47474a" />
    <rect x="19" y="36" width="41" height="33.500" rx="4" fill="#333336" />
    <rect x="22.500" y="38" width="34.500" height="28.500" rx="2" fill="#fbfbfb" />
    <path d="M29 48 H51 M29 57.500 H51" stroke="#2e2e30" strokeWidth="2.600" strokeLinecap="round" />
    <circle cx="56.500" cy="29.500" r="3.800" fill="#fff" />
  </Tile>
);

type DockItem = { name: string; icon: ReactNode; running?: boolean; badge?: string; wide?: boolean };

const mainApps: DockItem[] = [
  { name: "Finder", icon: finder, running: true },
  { name: "Launchpad", icon: launchpad },
  { name: "Safari", icon: safari },
  { name: "FaceTime", icon: facetime },
  { name: "Maps", icon: maps },
  { name: "Contacts", icon: contacts },
  { name: "Calendar", icon: calendar },
  { name: "Reminders", icon: reminders, running: true, badge: "5" },
  { name: "Notes", icon: notes, running: true },
  { name: "Freeform", icon: freeform },
  { name: "Music", icon: music },
  { name: "Podcasts", icon: podcasts },
  { name: "TV", icon: tv, running: true },
  { name: "News", icon: news },
  { name: "Numbers", icon: numbers },
  { name: "Keynote", icon: keynote, running: true },
  { name: "Pages", icon: pages },
  { name: "App Store", icon: appStore },
  { name: "Settings", icon: settings, badge: "1" },
  { name: "Printer", icon: printerApp },
  { name: "Mail", icon: mail, running: true, badge: "1,781", wide: true },
  { name: "Chrome", icon: chrome, running: true },
  { name: "Teams", icon: teams },
];

const recentApps: DockItem[] = [
  { name: "Code", icon: vscode, running: true },
  { name: "Excel", icon: excel, running: true },
  { name: "Terminal", icon: terminal, running: true },
  { name: "Acrobat", icon: acrobat, running: true },
  { name: "Keychain", icon: keychain, running: true },
  { name: "Print Queue", icon: printQueue, running: true },
];

function DockGroup({ items }: { items: DockItem[] }) {
  return (
    <div className="flex gap-[26.4px]">
      {items.map((item) => (
        <div key={item.name} className="relative flex h-[105px] w-20 flex-col">
          {item.icon}
          {item.running && <div className="mx-auto mt-auto size-2 rounded-full bg-[#c9bb98]" />}
          {item.badge && (
            <div className={`absolute -top-[9px] flex h-[38px] items-center justify-center bg-[#e34b3f]/95 text-[22px] text-white ${item.wide ? "-right-[12px] w-[54px] rounded-[19px] text-[21px] tracking-[-1px]" : "-right-[14px] w-[38px] rounded-full"}`}>
              {item.badge}
            </div>
          )}
        </div>
      ))}
    </div>
  );
}

function DocumentStack() {
  return (
    <svg className="-mt-2 shrink-0" width="50" height="94" viewBox="0 0 50 94">
      <path d="M1 1 H48 V11 H50 V93 H0 V11 H1 Z" fill="#f3f3f4" />
      <path d="M1 1 H4 V11 L6 93 H0 V11 H1 Z" fill="#2b2622" />
      <path d="M6 9 H11 M15 8 H21 M6 14 H11 M15 13 H21 M6 37 H9 M6 41 H10 M28 38 H32 M28 42 H32 M6 48 H9 M28 50 H32 M6 54 H9 M28 54 H32" stroke="#8b8b8d" strokeWidth="1.200" />
      <path d="M6 22 H32 M6 59 H32" stroke="#b5b5b8" strokeWidth="1" />
      <path d="M6 73 H20 M6 79 H18 M28 78 H44 M28 81 H38 M9 91 H38" stroke="#9b9b9d" strokeWidth="1" />
      <rect x="27" y="71" width="4" height="4" fill="#222" />
      <path d="M28 4 V33 Q40 28 48 33 Q42 18 30 11 Z" fill="#fff" stroke="#c9c9cc" strokeWidth="0.800" />
      <path d="M28 14 V32 H48 Q46 26 28 14 Z" fill="#d9d9dc" />
    </svg>
  );
}

function TrashCan() {
  return (
    <svg className="-mt-2 shrink-0" width="70" height="94" viewBox="0 0 70 94">
      <defs>
        <linearGradient id="can" x1="0" y1="0" x2="1" y2="0"><stop offset="0" stopColor="#9b9ea2" /><stop offset="0.2" stopColor="#76797d" /><stop offset="0.5" stopColor="#8c8f93" /><stop offset="0.8" stopColor="#6b6e72" /><stop offset="1" stopColor="#9a9da1" /></linearGradient>
        <filter id="smudge"><feGaussianBlur stdDeviation="3" /></filter>
      </defs>
      <path d="M0.500 13 Q35 26 69.500 13 L61.500 82 Q60 91.500 35 91.500 Q10 91.500 8.500 82 Z" fill="url(#can)" />
      <path d="M0.500 12 Q10 6 35 6 Q60 6 69.500 12 Q66 21 35 21.500 Q4 21 0.500 12 Z" fill="#6b6e71" />
      <path d="M6 9 L24 1 L34 6 L42 2 L52 8 L62 9 L60 16 L46 19 L36 15 L28 20 L12 17 Z" fill="#efefef" />
      <path d="M12 12 L20 8 L24 14 Z M42 12 L52 9 L54 16 L44 17 Z" fill="#6b6670" />
      <path d="M22 10 L32 8 L30 14 Z" fill="#41c3c9" /><path d="M44 11 L52 13 L46 17 Z" fill="#c46a33" /><path d="M28 14 L34 11 L33 17 Z" fill="#b6cf58" />
      <path d="M22 28 Q44 38 50 24 M18 60 Q30 54 40 62 Q52 70 56 44" fill="none" stroke="#a9acb0" strokeWidth="5" opacity="0.6" filter="url(#smudge)" />
      <path d="M10 80 Q35 92 60 80" fill="none" stroke="#b8bbbf" strokeWidth="1.500" opacity="0.5" />
    </svg>
  );
}

function Dock() {
  return (
    <div className="relative z-10 ml-[88px] mt-[13px] flex h-[128px] w-[3407px] shrink-0 rounded-[42px] border-2 border-[#685c43] bg-linear-to-r from-[#46381a] via-[#493915] via-45% to-[#352917] pl-[17px] pt-[17px] shadow-[0_0_80px_rgba(0,0,0,0.24)]">
      <DockGroup items={mainApps} />
      <div className="-mt-[3px] ml-[38px] h-24 w-[2px] shrink-0 bg-[#6d6351]" />
      <div className="ml-[35px]"><DockGroup items={recentApps} /></div>
      <div className="-mt-[3px] ml-[37px] h-24 w-[2px] shrink-0 bg-[#6d6351]" />
      <div className="ml-[50px]"><DocumentStack /></div>
      <div className="ml-[48px]"><TrashCan /></div>
    </div>
  );
}

export default function App() {
  return (
    <div className="relative flex h-[2240px] w-[3584px] flex-col overflow-hidden bg-[#2a1c10] font-['Inter',sans-serif]">
      <Wallpaper />
      <MenuBar />
      <div className="relative mt-px shrink-0 rounded-[20px] border-y border-black shadow-[0_10px_40px_rgba(0,0,0,0.75)]">
        <div className="relative overflow-hidden rounded-t-[20px]">
          <TabStrip />
          <Toolbar />
          <BookmarksBar />
          <div className="pointer-events-none absolute inset-0 rounded-t-[20px] border-2 border-b-0 border-[#5f6164]" />
        </div>
        <StudentPage />
      </div>
      <Dock />
    </div>
  );
}
